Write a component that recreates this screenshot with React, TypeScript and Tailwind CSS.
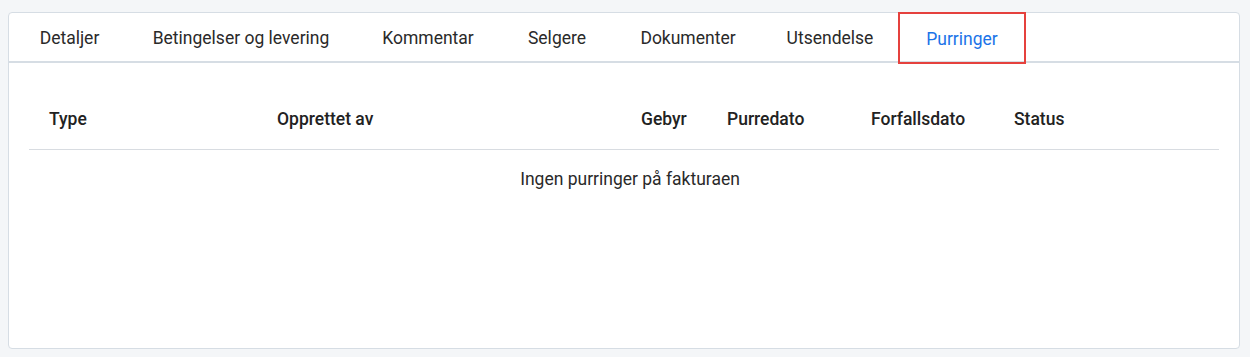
import * as React from 'react';

interface TabDef {
  id: string;
  label: string;
  width: string;
}

const tabs: TabDef[] = [
  { id: 'detaljer', label: 'Detaljer', width: 'w-[113px]' },
  { id: 'betingelser', label: 'Betingelser og levering', width: 'w-[230px]' },
  { id: 'kommentar', label: 'Kommentar', width: 'w-[144px]' },
  { id: 'selgere', label: 'Selgere', width: 'w-[114px]' },
  { id: 'dokumenter', label: 'Dokumenter', width: 'w-[148px]' },
  { id: 'utsendelse', label: 'Utsendelse', width: 'w-[136px]' },
  { id: 'purringer', label: 'Purringer', width: 'w-[128px]' },
];

const columns = [
  { label: 'Type', width: 'w-[228px]' },
  { label: 'Opprettet av', width: 'w-[364px]' },
  { label: 'Gebyr', width: 'w-[86px]' },
  { label: 'Purredato', width: 'w-[144px]' },
  { label: 'Forfallsdato', width: 'w-[143px]' },
  { label: 'Status', width: 'flex-1' },
];

export default function App() {
  const [active, setActive] = React.useState('purringer');

  return (
    <div className="w-[1250px] h-[357px] bg-[#f4f6f8] pt-[12px] pl-[8px] pr-[10px] font-['Roboto','Liberation_Sans',sans-serif] text-[17.5px] text-[#2a2a2a]">
      <div className="h-[337px] bg-white border border-[#d6dde4] rounded-[4px] flex flex-col">
        {/* tab bar */}
        <div className="flex pl-1 h-[50px] border-b-2 border-[#d6dde4]">
          {tabs.map((tab) => {
            const isActive = tab.id === active;
            return (
              <button
                key={tab.id}
                onClick={() => setActive(tab.id)}
                className={
                  isActive
                    ? `${tab.width} -mt-px -mb-[2px] h-[52px] pt-[3px] flex items-center justify-center border-2 border-[#e5413d] text-[#1a73e8]`
                    : `${tab.width} h-[48px] pt-[2px] flex items-center justify-center text-[#2a2a2a]`
                }
              >
                {tab.label}
              </button>
            );
          })}
        </div>

        {/* table */}
        <div className="mx-5 pt-[26px]">
          <div className="flex border-b border-[#d8dce1] py-[18px] leading-6 font-medium text-[#222]">
            {columns.map((col) => (
              <div key={col.label} className={`${col.width} px-5`}>
                {col.label}
              </div>
            ))}
          </div>
          <div className="py-[17px] pl-[12px] leading-6 text-center text-[#2a2a2a]">
            Ingen purringer på fakturaen
          </div>
        </div>
      </div>
    </div>
  );
}
